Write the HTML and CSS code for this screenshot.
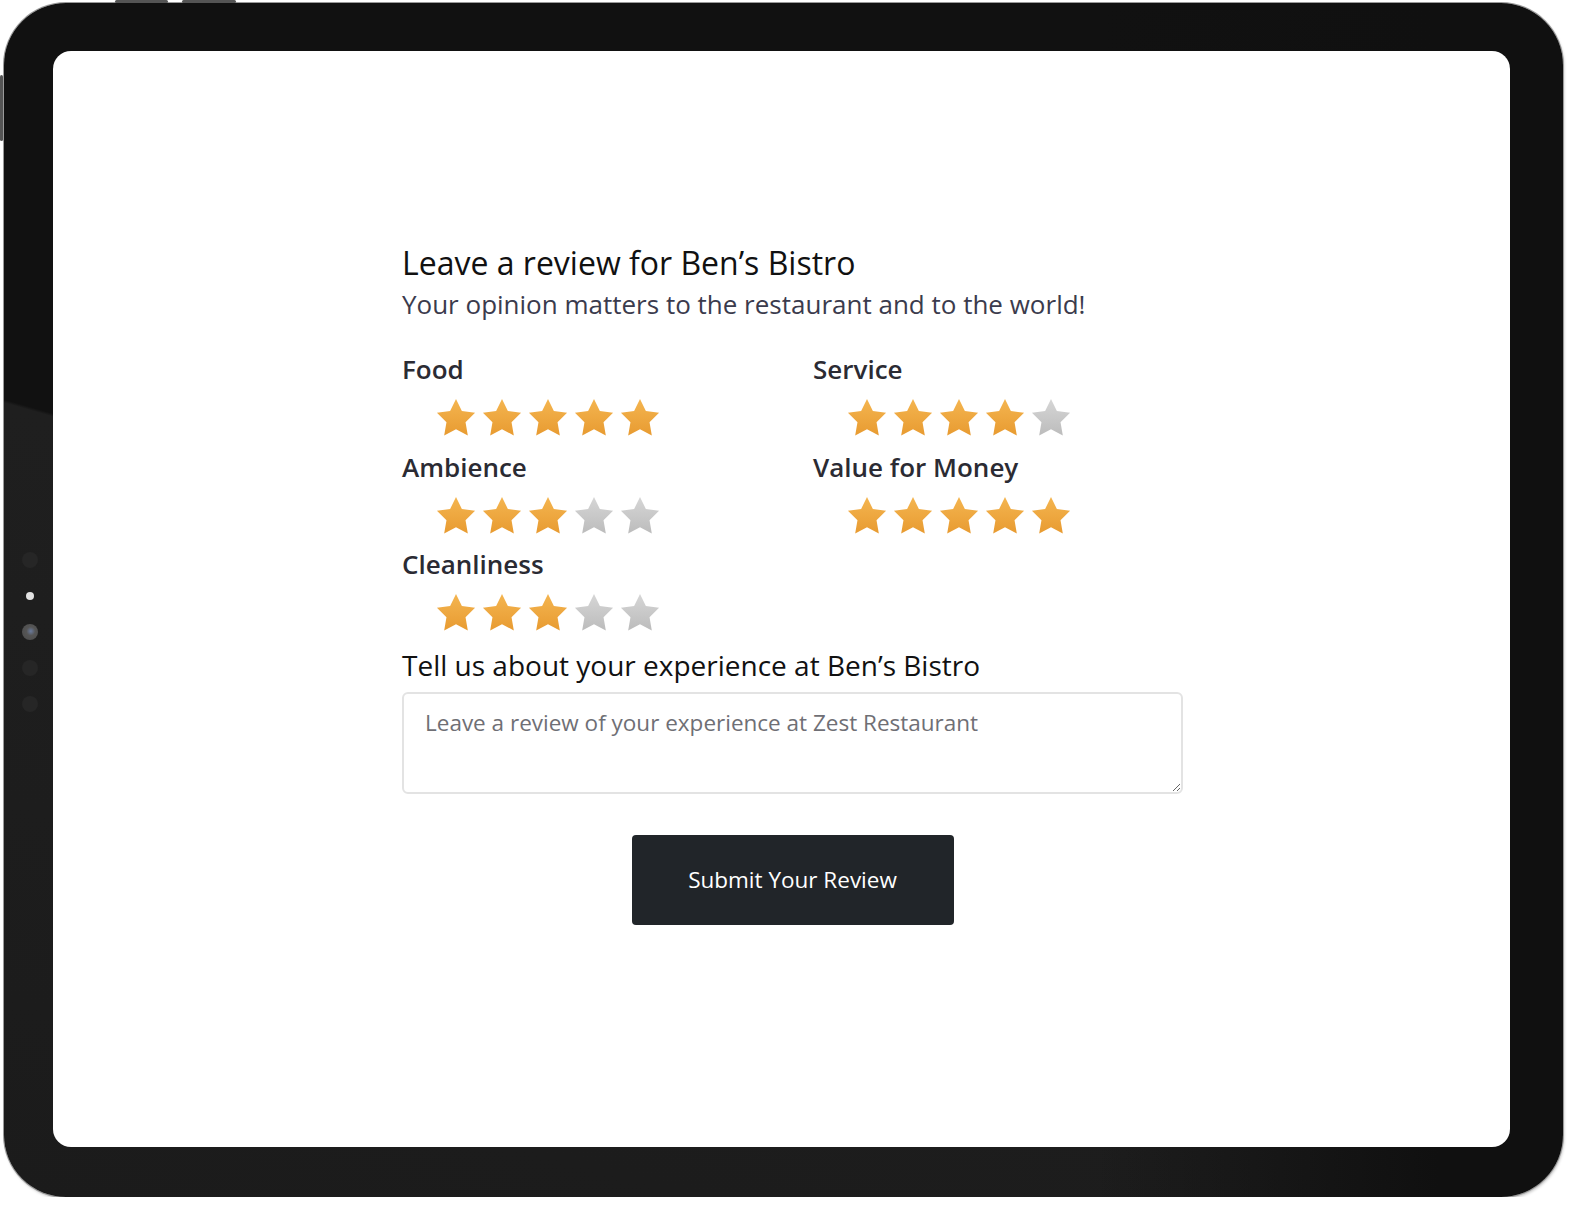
FILE: index.html
```html
<!DOCTYPE html>
<html lang="en">

<head>
    <meta charset="UTF-8" />
    <title>Leave a review</title>
    <link rel="stylesheet" href="styles.css">
</head>

<body>
    <svg width="0" height="0" class="defs">
        <defs>
            <linearGradient id="gold" x1="0" y1="0" x2="0" y2="1">
                <stop offset="0" stop-color="#f4b550" />
                <stop offset="1" stop-color="#e89b31" />
            </linearGradient>
            <linearGradient id="grey" x1="0" y1="0" x2="0" y2="1">
                <stop offset="0" stop-color="#d6d6d6" />
                <stop offset="1" stop-color="#bcbcbc" />
            </linearGradient>
            <symbol id="star" viewBox="0 0 24 24">
                <path d="M12 1.6l3.2 6.6 7.2 1-5.2 5.1 1.25 7.2L12 18.1l-6.45 3.4 1.25-7.2L1.6 9.2l7.2-1z" />
            </symbol>
        </defs>
    </svg>

    <div class="tablet">
        <span class="key key-top1"></span>
        <span class="key key-top2"></span>
        <span class="key key-side"></span>
        <div class="sensors">
            <span class="dot"></span>
            <span class="dot dot-light"></span>
            <span class="dot dot-cam"></span>
            <span class="dot"></span>
            <span class="dot"></span>
        </div>

        <div class="screen">
            <form class="review" action="#" method="post">
                <h1 class="title">Leave a review for Ben’s Bistro</h1>
                <p class="subtitle">Your opinion matters to the restaurant and to the world!</p>

                <div class="ratings">
                    <div class="rating">
                        <label class="rating-label">Food</label>
                        <div class="stars" data-value="5"></div>
                    </div>
                    <div class="rating">
                        <label class="rating-label">Service</label>
                        <div class="stars" data-value="4"></div>
                    </div>
                    <div class="rating">
                        <label class="rating-label">Ambience</label>
                        <div class="stars" data-value="3"></div>
                    </div>
                    <div class="rating">
                        <label class="rating-label">Value for Money</label>
                        <div class="stars" data-value="5"></div>
                    </div>
                    <div class="rating">
                        <label class="rating-label">Cleanliness</label>
                        <div class="stars" data-value="3"></div>
                    </div>
                </div>

                <label class="comment-label" for="comment">Tell us about your experience at Ben’s Bistro</label>
                <textarea id="comment" class="comment" placeholder="Leave a review of your experience at Zest Restaurant"></textarea>

                <div class="actions">
                    <button type="button" class="submit">Submit Your Review</button>
                </div>
            </form>
        </div>
    </div>

    <script>
        let starBoxes = document.querySelectorAll(".stars")
        for (let i = 0; i < starBoxes.length; i++) {
            let value = Number(starBoxes[i].dataset.value)
            let html = ""
            for (let s = 1; s <= 5; s++) {
                let fill = s <= value ? "url(#gold)" : "url(#grey)"
                html += '<svg class="star" viewBox="0 0 24 24"><use href="#star" fill="' + fill + '"></use></svg>'
            }
            starBoxes[i].innerHTML = html
        }
    </script>
</body>

</html>
```

FILE: styles.css
```css
body {
    margin: 0;
    padding: 3px 0 0 4px;
    background-color: #fff;
    font-family: "Open Sans", "Noto Sans", sans-serif;
}

.defs {
    position: absolute;
}

.tablet {
    position: relative;
    box-sizing: border-box;
    width: 1559px;
    height: 1194px;
    padding: 48px 53px 50px 49px;
    border-radius: 62px;
    background:
        linear-gradient(90deg, rgba(16, 16, 16, 0) 70%, #101010 92%),
        linear-gradient(196deg, #111 51.4%, #1f1f1f 51.6%, #1b1b1b 100%);
    box-shadow: 0 0 0 1px #9a9a9a, 1px 2px 3px rgba(0, 0, 0, 0.25);
}

.key {
    position: absolute;
    background-color: #555;
    border-radius: 2px;
}

.key-top1 {
    top: -3px;
    left: 111px;
    width: 53px;
    height: 3px;
}

.key-top2 {
    top: -3px;
    left: 178px;
    width: 54px;
    height: 3px;
}

.key-side {
    top: 72px;
    left: -4px;
    width: 3px;
    height: 66px;
}

.sensors {
    position: absolute;
    left: 18px;
    top: 549px;
    display: flex;
    flex-direction: column;
    align-items: center;
    gap: 20px;
    width: 16px;
}

.dot {
    width: 16px;
    height: 16px;
    border-radius: 50%;
    background-color: #262626;
}

.dot-light {
    width: 8px;
    height: 8px;
    margin: 4px 0;
    background-color: #e2e2e2;
}

.dot-cam {
    background: radial-gradient(circle at 55% 45%, #6a7a9c 0, #555 35%, #4a4a4a 100%);
}

.screen {
    box-sizing: border-box;
    height: 100%;
    padding: 191px 0 0 349px;
    border-radius: 18px;
    background-color: #fff;
}

.review {
    width: 781px;
}

.title {
    margin: 0;
    color: #111;
    font-size: 32px;
    font-weight: 400;
    line-height: 42px;
}

.subtitle {
    margin: 2px 0 0;
    color: #3b3b4d;
    font-size: 26px;
    line-height: 36px;
}

.ratings {
    display: grid;
    grid-template-columns: 411px 1fr;
    margin-top: 31px;
}

.rating {
    height: 97.5px;
}

.rating-label {
    display: block;
    color: #2b2b33;
    font-size: 26px;
    font-weight: 600;
    line-height: 32px;
}

.stars {
    display: flex;
    gap: 2px;
    margin: 11px 0 0 32px;
}

.star {
    width: 44px;
    height: 44px;
}

.comment-label {
    display: block;
    margin-top: 1px;
    color: #111;
    font-size: 28px;
    font-weight: 500;
    line-height: 36px;
}

.comment {
    display: block;
    box-sizing: border-box;
    width: 781px;
    height: 102px;
    margin-top: 9px;
    padding: 13px 21px;
    border: 2px solid #e3e3e3;
    border-radius: 6px;
    font-family: inherit;
    font-size: 22.5px;
    color: #333;
}

.comment::placeholder {
    color: #6f6f75;
}

.actions {
    display: flex;
    justify-content: center;
    margin-top: 41px;
}

.submit {
    width: 322px;
    height: 90px;
    border: none;
    border-radius: 4px;
    background-color: #212529;
    color: #fff;
    font-family: inherit;
    font-size: 22.5px;
    cursor: pointer;
}
```
